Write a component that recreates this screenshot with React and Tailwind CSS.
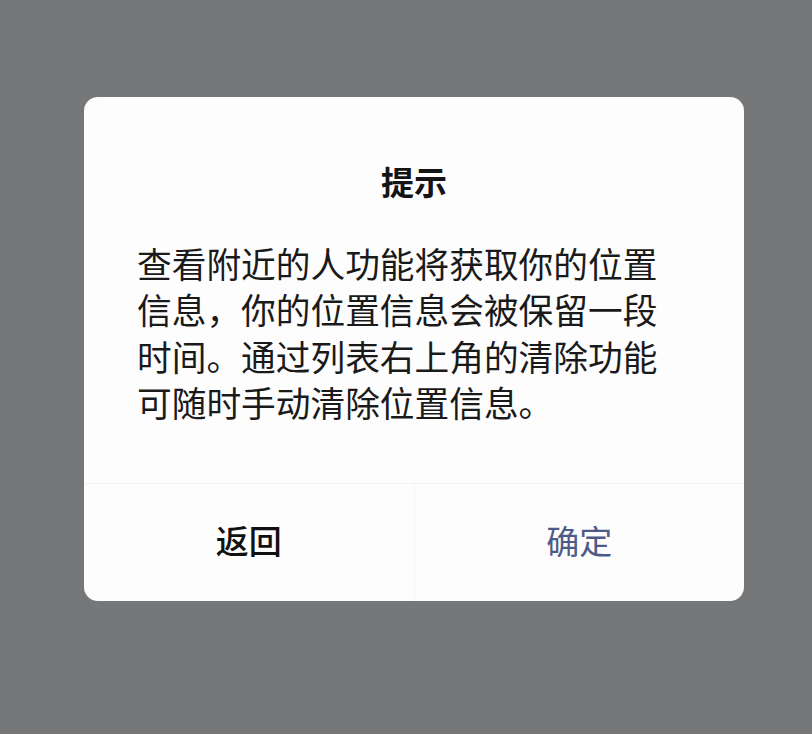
import React from 'react';

const lines = [
  "查看附近的人功能将获取你的位置",
  "信息，你的位置信息会被保留一段",
  "时间。通过列表右上角的清除功能",
  "可随时手动清除位置信息。",
];

const App = () => {
  return (
    <div
      className="w-[812px] h-[734px] bg-[#767779] pt-[97px] pl-[84px]"
      style={{ fontFamily: '"Noto Sans CJK SC", "Noto Sans", sans-serif' }}
    >
      <div className="w-[660px] h-[504px] bg-[#fdfdfe] rounded-[14px] flex flex-col overflow-hidden">
        <h1 className="pt-[64px] text-center text-[33px] leading-[40px] font-bold text-[#141414]">
          提示
        </h1>
        <div className="mt-[39px] pl-[53px] text-[34.7px] leading-[46.3px] text-[#1a1a1a] tracking-[0px]">
          {lines.map((line, i) => (
            <div key={i} className="whitespace-nowrap">{line}</div>
          ))}
        </div>
        <div className="mt-auto h-[118px] border-t border-[#f3f4f7] flex">
          <button className="flex-1 flex items-center justify-center pb-[4px] text-[33px] font-medium text-[#111]">
            返回
          </button>
          <button className="flex-1 flex items-center justify-center pb-[4px] border-l border-[#f3f4f7] text-[33px] text-[#4d5b86]">
            确定
          </button>
        </div>
      </div>
    </div>
  );
};

export default App;
